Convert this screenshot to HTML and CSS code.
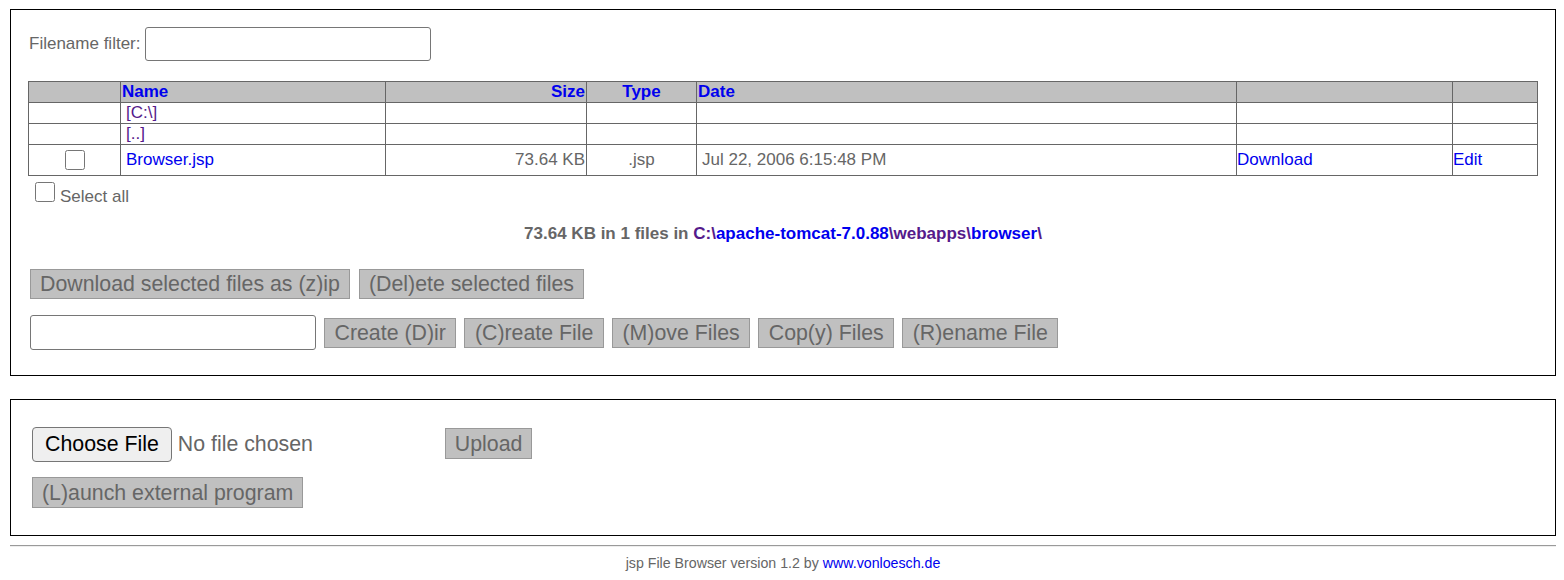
FILE: index.html
```html
<!DOCTYPE html>
<html>
<head>
<meta charset="utf-8">
<title>jsp File Browser</title>
<link rel="stylesheet" href="styles.css">
</head>
<body>
<div class="page">
  <div class="box box-main">
    <div class="filter-row">
      <label class="filter-label">Filename filter:</label>
      <input class="text-in filter-in" type="text">
    </div>
    <table class="files">
      <colgroup>
        <col class="c1"><col class="c2"><col class="c3"><col class="c4"><col class="c5"><col class="c6"><col class="c7">
      </colgroup>
      <tr class="head">
        <th></th>
        <th class="left"><a href="#">Name</a></th>
        <th class="right"><a href="#">Size</a></th>
        <th class="center"><a href="#">Type</a></th>
        <th class="left"><a href="#">Date</a></th>
        <th></th>
        <th></th>
      </tr>
      <tr class="row">
        <td></td>
        <td class="pad"><a class="visited" href="#">[C:\]</a></td>
        <td></td><td></td><td></td><td></td><td></td>
      </tr>
      <tr class="row">
        <td></td>
        <td class="pad"><a class="visited" href="#">[..]</a></td>
        <td></td><td></td><td></td><td></td><td></td>
      </tr>
      <tr class="row file-row">
        <td class="center"><input class="chk" type="checkbox"></td>
        <td class="pad"><a href="#">Browser.jsp</a></td>
        <td class="right">73.64 KB</td>
        <td class="center">.jsp</td>
        <td class="pad">Jul 22, 2006 6:15:48 PM</td>
        <td class="flush"><a href="#">Download</a></td>
        <td class="flush"><a href="#">Edit</a></td>
      </tr>
    </table>
    <div class="select-all"><input class="chk sel-chk" type="checkbox"><span class="sel-label">Select all</span></div>
    <div class="summary">73.64 KB in 1 files in <a class="visited" href="#">C:\</a><a href="#">apache-tomcat-7.0.88</a><a class="visited" href="#">\webapps\</a><a href="#">browser</a><a class="visited" href="#">\</a></div>
    <div class="btn-row row1">
      <button class="btn">Download selected files as (z)ip</button>
      <button class="btn">(Del)ete selected files</button>
    </div>
    <div class="btn-row row2">
      <input class="text-in name-in" type="text">
      <button class="btn">Create (D)ir</button>
      <button class="btn">(C)reate File</button>
      <button class="btn">(M)ove Files</button>
      <button class="btn">Cop(y) Files</button>
      <button class="btn">(R)ename File</button>
    </div>
  </div>

  <div class="box box-upload">
    <div class="upload-row">
      <button class="choose">Choose File</button>
      <span class="no-file">No file chosen</span>
      <button class="btn upload">Upload</button>
    </div>
    <div class="launch-row">
      <button class="btn">(L)aunch external program</button>
    </div>
  </div>

  <div class="rule"></div>
  <div class="footer">jsp File Browser version 1.2 by <a href="#">www.vonloesch.de</a></div>
</div>
</body>
</html>
```

FILE: styles.css
```css
html, body {
  margin: 0;
  padding: 0;
  background: #ffffff;
}
body {
  font-family: "Liberation Sans", Arial, sans-serif;
  font-size: 17px;
  color: #666666;
}
a {
  color: #0000ee;
  text-decoration: none;
}
a.visited {
  color: #551a8b;
}
.page {
  padding: 9px 8px 0 10px;
}
.box {
  border: 1px solid #000000;
}
.box-main {
  padding: 17px 17px 25px 17px;
}
.filter-row {
  display: flex;
  align-items: center;
  height: 33px;
  padding-left: 1px;
}
.filter-label {
  margin-right: 5px;
  padding-top: 1px;
}
.text-in {
  box-sizing: border-box;
  border: 1px solid #767676;
  border-radius: 3px;
  background: #fff;
  margin: 0;
  font-family: "Liberation Sans", Arial, sans-serif;
  font-size: 17px;
}
.filter-in {
  width: 286px;
  height: 34px;
}
.files {
  margin-top: 21px;
  width: 1510px;
  table-layout: fixed;
  border-collapse: collapse;
  border: 1px solid #666666;
}
.c1 { width: 92px; }
.c2 { width: 265px; }
.c3 { width: 201px; }
.c4 { width: 110px; }
.c5 { width: 540px; }
.c6 { width: 216px; }
.c7 { width: 85px; }
.files th, .files td {
  border: 1px solid #666666;
  padding: 0 1px;
  font-size: 17px;
  line-height: 18px;
  white-space: nowrap;
  text-align: left;
}
.files th {
  background: #c0c0c0;
  font-weight: bold;
  height: 20px;
}
.files td {
  height: 20px;
}
.files .file-row td {
  height: 30px;
}
.files .left { text-align: left; }
.files .right { text-align: right; }
.files .center { text-align: center; }
.files .pad { padding-left: 5px; }
.files .flush { padding-left: 0; }
.chk {
  width: 20px;
  height: 20px;
  margin: 0;
  vertical-align: middle;
}
.select-all {
  margin-top: 6px;
  padding-left: 7px;
  height: 24px;
  line-height: 20px;
}
.sel-chk {
  vertical-align: baseline;
  margin: 0 5px 0 0;
}
.summary {
  margin-top: 19px;
  text-align: center;
  font-weight: bold;
  line-height: 18px;
}
.summary a {
  font-weight: bold;
}
.btn-row {
  display: flex;
  align-items: center;
  gap: 9px;
  padding-left: 2px;
}
.row1 {
  margin-top: 26px;
}
.row2 {
  margin-top: 16px;
  gap: 8px;
}
.row2 .btn {
  padding: 0 9.5px;
}
.name-in {
  width: 286px;
  height: 35px;
}
.btn {
  box-sizing: border-box;
  height: 30px;
  margin: 0;
  padding: 0 9px;
  background: #c0c0c0;
  border: 1px solid #999999;
  border-radius: 0;
  color: #666666;
  font-family: "Liberation Sans", Arial, sans-serif;
  font-size: 21.33px;
  line-height: 26px;
}
.box-upload {
  margin-top: 23px;
  padding: 27px 21px 27px 21px;
}
.upload-row {
  display: flex;
  align-items: center;
  height: 35px;
}
.choose {
  box-sizing: border-box;
  height: 35px;
  margin: 0;
  padding: 0 12px;
  background: #efefef;
  border: 1px solid #767676;
  border-radius: 4px;
  color: #000000;
  font-family: "Liberation Sans", Arial, sans-serif;
  font-size: 21.33px;
}
.no-file {
  margin-left: 6px;
  font-size: 21.33px;
  width: 267px;
}
.upload {
  height: 31px;
  margin-bottom: 2px;
}
.launch-row {
  margin-top: 15px;
  display: flex;
}
.launch-row .btn {
  height: 31px;
}
.rule {
  margin-top: 9px;
  height: 0;
  border-top: 1px solid #9a9a9a;
  border-bottom: 1px solid #eeeeee;
}
.footer {
  margin-top: 8px;
  text-align: center;
  font-size: 14.2px;
  line-height: 16px;
}
```
